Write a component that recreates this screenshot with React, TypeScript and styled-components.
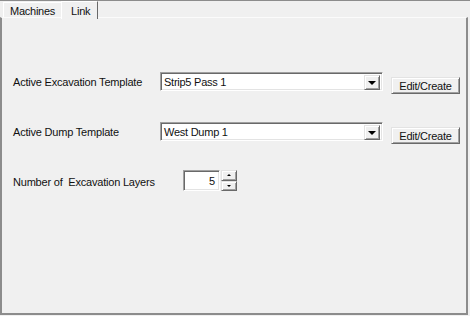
import React from "react";
import styled, { createGlobalStyle } from "styled-components";

const GlobalStyle = createGlobalStyle`
	html, body {
		margin: 0;
		padding: 0;
		background: #f0f0f0;
	}
	body {
		font-family: "Liberation Sans", Arial, sans-serif;
		font-size: 11px;
		color: #111;
	}
`;

const App: React.FC = () => {
	return (
		<>
			<GlobalStyle />
			<Window>
				<TabStrip>
					<Tab>Machines</Tab>
					<Tab active>Link</Tab>
				</TabStrip>
				<Panel>
					<Row>
						<Label width={147}>Active Excavation Template</Label>
						<Combo>
							<ComboText>Strip5 Pass 1</ComboText>
							<ArrowButton>
								<DownArrow />
							</ArrowButton>
						</Combo>
						<Button>Edit/Create</Button>
					</Row>
					<Row>
						<Label width={147}>Active Dump Template</Label>
						<Combo>
							<ComboText>West Dump 1</ComboText>
							<ArrowButton>
								<DownArrow />
							</ArrowButton>
						</Combo>
						<Button>Edit/Create</Button>
					</Row>
					<Row>
						<Label width={170}>Number of  Excavation Layers</Label>
						<Spin>
							<SpinText>5</SpinText>
							<SpinButtons>
								<SpinButton>
									<SmallArrow up />
								</SpinButton>
								<SpinButton>
									<SmallArrow />
								</SpinButton>
							</SpinButtons>
						</Spin>
					</Row>
				</Panel>
			</Window>
		</>
	);
};

export default App;

const Window = styled.div`
	width: 470px;
	height: 316px;
	display: flex;
	flex-direction: column;
	overflow: hidden;
`;

const TabStrip = styled.div`
	height: 17px;
	display: flex;
	align-items: flex-end;
	padding-left: 3px;
	border-top: 1px solid #8c8c8c;
	box-sizing: border-box;
	position: relative;
	z-index: 1;
`;

const Tab = styled.div<{ active?: boolean }>`
	box-sizing: border-box;
	height: ${({ active }) => (active ? "18px" : "15px")};
	margin-bottom: ${({ active }) => (active ? "-2px" : "0")};
	padding: ${({ active }) => (active ? "3px 7px 0 9px" : "2px 6px 0 6px")};
	background: #f0f0f0;
	border-top: 1px solid #fff;
	border-left: 1px solid #fff;
	border-right: ${({ active }) => (active ? "1px solid #696969" : "none")};
	letter-spacing: -0.25px;
	line-height: 13px;
	white-space: nowrap;
`;

const Panel = styled.div`
	width: 468px;
	height: 298px;
	box-sizing: border-box;
	border: 2px solid #8c8c8c;
	border-top: 1px solid #fbfbfb;
	padding: 54px 0 0 11px;
	display: flex;
	flex-direction: column;
`;

const Row = styled.div`
	height: 50px;
	display: flex;
	align-items: flex-start;
	flex-shrink: 0;
`;

const Label = styled.div<{ width: number }>`
	width: ${({ width }) => width}px;
	height: 20px;
	line-height: 20px;
	white-space: pre;
	letter-spacing: -0.2px;
`;

const Sunken = styled.div`
	box-sizing: border-box;
	background: #fff;
	border-top: 1px solid #a0a0a0;
	border-left: 1px solid #a0a0a0;
	border-bottom: 1px solid #fff;
	border-right: 1px solid #fff;
	box-shadow: inset 1px 1px 0 #696969, inset -1px -1px 0 #e3e3e3;
	display: flex;
`;

const Combo = styled(Sunken)`
	width: 223px;
	height: 19px;
	padding: 2px;
`;

const ComboText = styled.div`
	flex: 1;
	line-height: 15px;
	padding-left: 1px;
	letter-spacing: -0.25px;
`;

const Raised = styled.div`
	box-sizing: border-box;
	background: #f0f0f0;
	border-top: 1px solid #e3e3e3;
	border-left: 1px solid #e3e3e3;
	border-bottom: 1px solid #696969;
	border-right: 1px solid #696969;
	box-shadow: inset 1px 1px 0 #fff, inset -1px -1px 0 #a0a0a0;
	display: flex;
	align-items: center;
	justify-content: center;
`;

const ArrowButton = styled(Raised)`
	width: 16px;
	height: 15px;
`;

const DownArrow = styled.div`
	width: 0;
	height: 0;
	border-left: 4px solid transparent;
	border-right: 4px solid transparent;
	border-top: 4px solid #000;
	margin-top: 1px;
`;

const Button = styled(Raised)`
	width: 69px;
	height: 17px;
	margin-left: 8px;
	margin-top: 5px;
	letter-spacing: -0.25px;
	padding-top: 1px;
`;

const Spin = styled.div`
	display: flex;
	height: 21px;
	margin-top: -2px;
`;

const SpinText = styled(Sunken)`
	width: 37px;
	height: 21px;
	justify-content: flex-end;
	align-items: center;
	padding-right: 4px;
`;

const SpinButtons = styled.div`
	display: flex;
	flex-direction: column;
	margin-left: 1px;
`;

const SpinButton = styled(Raised)`
	width: 16px;
	height: 10.5px;
`;

const SmallArrow = styled.div<{ up?: boolean }>`
	width: 0;
	height: 0;
	border-left: 2px solid transparent;
	border-right: 2px solid transparent;
	${({ up }) =>
		up ? "border-bottom: 2px solid #000;" : "border-top: 2px solid #000;"}
`;
